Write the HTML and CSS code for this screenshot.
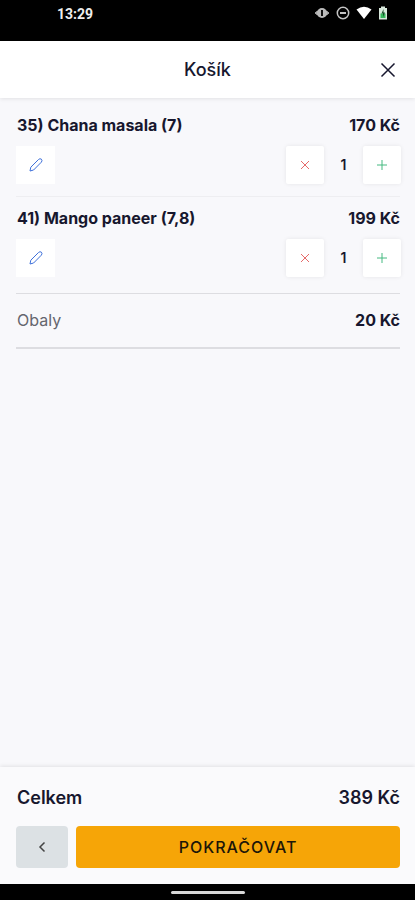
FILE: index.html
```html
<!DOCTYPE html>
<html lang="cs">
<head>
<meta charset="utf-8">
<meta name="viewport" content="width=device-width, initial-scale=1">
<title>Košík</title>
<link rel="stylesheet" href="styles.css">
</head>
<body>
<div class="status">
  <span class="clock">13:29</span>
  <div class="status-icons">
    <svg width="16" height="14" viewBox="0 0 16 14"><path d="M1 7 3.500 5v4zM15 7 12.500 5v4z" fill="#aaa" stroke="#aaa"/><circle cx="8" cy="7" r="5" fill="#bbb"/><rect x="7" y="4" width="2" height="6" fill="#111"/></svg>
    <svg width="14" height="14" viewBox="0 0 14 14" fill="none" stroke="#c4c4c4"><circle cx="7" cy="7" r="5.700" stroke-width="1.500"/><path d="M4 7h6" stroke-width="2"/></svg>
    <svg width="16" height="14" viewBox="0 0 16 14"><path d="M0.500 3.500Q8-2.200 15.500 3.500L8 13z" fill="#fff"/></svg>
    <svg width="10" height="14" viewBox="0 0 10 14"><path d="M3 0.500h4V2h2v11.500H1V2h2z" fill="#d8e8dc"/><path d="M2.500 7.500h5V12h-5z" fill="#35b85b"/><path d="M5.500 3 3.500 7.500H5V11l2-4.500H5.500z" fill="#174f29"/></svg>
  </div>
</div>
<header class="header">
  <h1>Košík</h1>
  <button class="close" type="button" aria-label="Zavřít"><svg width="16" height="16" viewBox="0 0 16 16"><path d="M1.500 1.500l13 13M14.500 1.500l-13 13"/></svg></button>
</header>
<main class="cart">
  <section class="item">
    <div class="row"><h2>35) Chana masala (7)</h2><span class="price">170 Kč</span></div>
    <div class="controls">
      <button class="tile edit" type="button" aria-label="Upravit"><svg width="16" height="16" viewBox="0 0 16 16"><path d="M2 14l.8-3.800 7.700-7.700q1.500-1.400 2.900-.3 1.300 1.500-.1 3L5.600 13z"/></svg></button>
      <div class="stepper">
        <button class="tile raised remove" type="button" aria-label="Odebrat"><svg width="10" height="10" viewBox="0 0 10 10"><path d="M1 1l8 8M9 1L1 9"/></svg></button>
        <span class="count">1</span>
        <button class="tile raised add" type="button" aria-label="Přidat"><svg width="10" height="10" viewBox="0 0 10 10"><path d="M5 0v10M0 5h10"/></svg></button>
      </div>
    </div>
  </section>
  <section class="item">
    <div class="row"><h2>41) Mango paneer (7,8)</h2><span class="price">199 Kč</span></div>
    <div class="controls">
      <button class="tile edit" type="button" aria-label="Upravit"><svg width="16" height="16" viewBox="0 0 16 16"><path d="M2 14l.8-3.800 7.700-7.700q1.500-1.400 2.900-.3 1.300 1.500-.1 3L5.600 13z"/></svg></button>
      <div class="stepper">
        <button class="tile raised remove" type="button" aria-label="Odebrat"><svg width="10" height="10" viewBox="0 0 10 10"><path d="M1 1l8 8M9 1L1 9"/></svg></button>
        <span class="count">1</span>
        <button class="tile raised add" type="button" aria-label="Přidat"><svg width="10" height="10" viewBox="0 0 10 10"><path d="M5 0v10M0 5h10"/></svg></button>
      </div>
    </div>
  </section>
  <div class="row packaging"><span class="label">Obaly</span><span class="price">20 Kč</span></div>
</main>
<footer class="footer">
  <div class="row total"><span>Celkem</span><span>389 Kč</span></div>
  <div class="actions">
    <button class="back" type="button" aria-label="Zpět"><svg width="8" height="12" viewBox="0 0 8 12"><path d="M6.500 1.500L2 6l4.500 4.500"/></svg></button>
    <button class="continue" type="button">POKRAČOVAT</button>
  </div>
</footer>
<div class="navbar"><span class="handle"></span></div>
</body>
</html>
```
FILE: styles.css
```css
* {
  box-sizing: border-box;
}

body {
  margin: 0;
  min-height: 100vh;
  display: flex;
  flex-direction: column;
  background: #f8f8fb;
  color: #17172e;
  font-family: Inter, "Liberation Sans", sans-serif;
  font-size: 16px;
  line-height: 22px;
}

h1,
h2 {
  margin: 0;
  font-size: inherit;
}

button {
  display: flex;
  align-items: center;
  justify-content: center;
  padding: 0;
  border: 0;
  font: inherit;
  color: inherit;
  cursor: pointer;
}

svg {
  display: block;
}

button svg {
  fill: none;
  stroke: currentColor;
}

.status {
  display: flex;
  justify-content: space-between;
  align-items: flex-start;
  height: 41px;
  padding: 6px 27px 0 57px;
  background: #000;
}

.clock {
  color: #eee;
  font-family: Roboto, sans-serif;
  font-size: 14px;
  font-weight: 700;
  line-height: 16px;
}

.status-icons {
  display: flex;
  gap: 6px;
}

.header {
  display: grid;
  grid-template-columns: 1fr auto 1fr;
  align-items: center;
  height: 57px;
  padding: 0 19px;
  background: #fff;
  box-shadow: 0 1px 4px #00000018;
}

.header h1 {
  grid-column: 2;
  font-size: 18px;
  font-weight: 500;
}

.close {
  justify-self: end;
  background: none;
}

.close svg {
  stroke-width: 1.5px;
}

.cart {
  flex: 1;
  padding: 6px 15px 0 16px;
}

.item {
  padding: 10px 0 12px;
  border-bottom: 1px solid #eeeef1;
}

.item:nth-of-type(2) {
  padding-bottom: 16px;
  border-bottom: 0;
}

.row {
  display: flex;
  justify-content: space-between;
  padding-left: 1px;
}

.row h2,
.price {
  font-weight: 700;
}

.controls {
  display: flex;
  justify-content: space-between;
  margin-top: 10px;
  margin-right: -1px;
}

.stepper {
  display: flex;
  align-items: center;
}

.tile {
  width: 38px;
  height: 38px;
  background: #fff;
}

.raised {
  border-radius: 2px;
  box-shadow: 0 0 4px #00000014;
}

.edit {
  width: 39px;
  color: #3e70da;
}

.remove {
  color: #e66a6a;
}

.add {
  color: #45b980;
}

.count {
  width: 39px;
  text-align: center;
  font-size: 14px;
  font-weight: 600;
}

.packaging {
  padding-top: 15px;
  padding-bottom: 16px;
  border-top: 1px solid #dddde1;
  border-bottom: 2px solid #dddde1;
}

.label {
  color: #65656e;
}

.footer {
  padding: 19px 15px 16px 16px;
  background: #fafafc;
  box-shadow: 0 -1px 4px #00000018;
}

.total {
  font-size: 18px;
  font-weight: 600;
  line-height: 24px;
}

.actions {
  display: flex;
  gap: 8px;
  margin-top: 16px;
}

.back,
.continue {
  height: 42px;
  border-radius: 4px;
}

.back {
  width: 52px;
  background: #dce1e4;
  color: #444;
}

.back svg {
  stroke-width: 1.5px;
}

.continue {
  flex: 1;
  background: #f6a507;
  color: #1d1608;
  font-weight: 500;
  letter-spacing: 1px;
}

.navbar {
  display: flex;
  justify-content: center;
  height: 16px;
  padding-top: 7px;
  background: #000;
}

.handle {
  width: 74px;
  height: 3px;
  border-radius: 2px;
  background: #d8d8d8;
}
```
